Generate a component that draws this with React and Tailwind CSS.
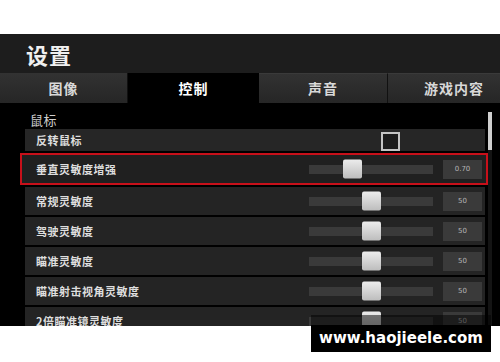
import React from 'react';

const cjk = { fontFamily: '"Noto Sans CJK SC", "Noto Sans", sans-serif' };

const rows = [
  { label: '常规灵敏度', value: '50', pos: 53 },
  { label: '驾驶灵敏度', value: '50', pos: 53 },
  { label: '瞄准灵敏度', value: '50', pos: 53 },
  { label: '瞄准射击视角灵敏度', value: '50', pos: 53 },
  { label: '2倍瞄准镜灵敏度', value: '50', pos: 53 },
];

function Slider({ pos, value }) {
  return (
    <div className="flex items-center gap-[10px]">
      <div className="relative w-[124px] h-[9px] bg-[#3a3a3a]">
        <div
          className="absolute top-1/2 -translate-y-1/2 w-[19px] h-[19px] rounded-[2px] bg-gradient-to-b from-[#ececec] to-[#bdbdbd]"
          style={{ left: `${pos}px` }}
        />
      </div>
      <div className="w-[39px] h-[19px] bg-[#3a3a3a] flex items-center justify-center text-[7px] text-[#b5b5b5]" style={{ fontFamily: '"DejaVu Sans", sans-serif' }}>
        {value}
      </div>
    </div>
  );
}

function Row({ label, value, pos }) {
  return (
    <div className="shrink-0 h-[28px] bg-[#242424] flex items-center pl-[11px] pr-[3px]">
      <span className="flex-1 text-[11px] font-bold text-[#dedede] tracking-[0.5px]">{label}</span>
      <Slider pos={pos} value={value} />
    </div>
  );
}

export default function App() {
  return (
    <div className="relative w-[500px] h-[362px] bg-white overflow-hidden" style={cjk}>
      <div className="h-[34px]" />
      <div className="h-[292px] bg-black flex flex-col overflow-hidden">
        <div className="shrink-0 h-[39px] bg-[#1d1d1d] pl-[26px] flex items-center">
          <span className="text-[22px] font-bold text-[#f0f0f0] tracking-[1px] leading-none">设置</span>
        </div>
        <div className="shrink-0 h-[30px] flex text-[14px] font-bold tracking-[1px]">
          <div className="w-[128px] bg-gradient-to-b from-[#323232] to-[#262626] border-r border-[#111] flex items-center justify-center text-[#d8d8d8]">图像</div>
          <div className="w-[131px] bg-black flex items-center justify-center text-white">控制</div>
          <div className="w-[129px] bg-gradient-to-b from-[#323232] to-[#262626] border-t border-[#3a3a3a] border-r border-r-[#111] flex items-center justify-center text-[#d8d8d8]">声音</div>
          <div className="flex-1 bg-gradient-to-b from-[#323232] to-[#262626] border-t border-[#3a3a3a] flex items-center justify-end pr-[16px] text-[#d8d8d8]">游戏内容</div>
        </div>
        <div className="relative shrink-0 pl-[25px] pr-[15px] pt-[7px]">
          <div className="absolute left-[488px] top-[9px] w-[4px] h-[38px] bg-[#cfcfcf]" />
          <div className="absolute left-[488px] top-[47px] w-[4px] h-[200px] bg-[#141414]" />
          <div className="h-[19px] pl-[5px] flex items-center text-[13px] text-[#cfcfcf] tracking-[0.5px]">鼠标</div>
          <div className="flex flex-col gap-[2px]">
            <div className="shrink-0 h-[22px] bg-[#262626] flex items-center pl-[11px]">
              <span className="flex-1 text-[11px] font-bold text-[#dedede] tracking-[0.5px]">反转鼠标</span>
              <div className="w-[19px] h-[19px] border-2 border-[#c4c4c4] bg-[#1c1c1c] mr-[85px] mt-[3px]" />
            </div>
            <div className="shrink-0 ml-[-5px] mr-[-3px] h-[32px] border-2 border-[#c8101a] bg-[#202020] flex items-center pl-[14px] pr-[4px]">
              <span className="flex-1 text-[11px] font-bold text-[#dedede] tracking-[0.5px]">垂直灵敏度增强</span>
              <Slider pos={34} value="0.70" />
            </div>
            {rows.map((r) => (
              <Row key={r.label} {...r} />
            ))}
          </div>
        </div>
      </div>
      <div className="absolute left-[311px] top-[315px] w-[180px] flex flex-col">
        <div className="h-[10px] bg-black/50" />
        <div className="h-[27px] bg-black flex items-center justify-center text-white font-bold text-[15px]" style={{ fontFamily: '"DejaVu Sans", sans-serif' }}>
          www.haojieele.com
        </div>
      </div>
    </div>
  );
}
